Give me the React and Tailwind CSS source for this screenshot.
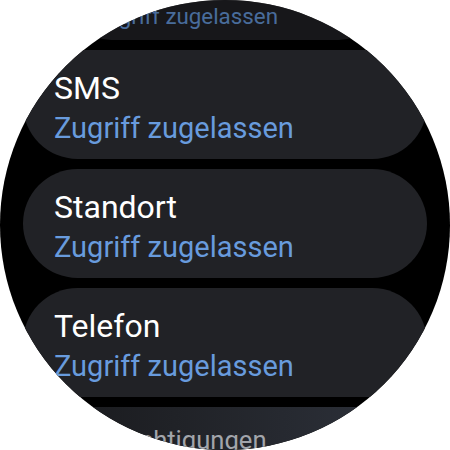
const permissions = [
  { name: 'Mikrofon', status: 'Zugriff zugelassen', edge: 'top' },
  { name: 'SMS', status: 'Zugriff zugelassen' },
  { name: 'Standort', status: 'Zugriff zugelassen' },
  { name: 'Telefon', status: 'Zugriff zugelassen' },
]

function PermissionChip({ name, status, edge }) {
  const scaled = edge === 'top' ? 'scale-[0.77] origin-bottom opacity-70' : ''
  return (
    <div className={`w-[404px] shrink-0 rounded-full bg-[#212226] pl-[31px] pr-6 pt-[18px] pb-[11px] ${scaled}`}>
      <div className="text-[32px] leading-[40px] text-white">{name}</div>
      <div className="text-[29px] leading-[40px] text-[#689bdd]">{status}</div>
    </div>
  )
}

export default function App() {
  return (
    <div className="w-[450px] h-[450px] bg-white" style={{ fontFamily: 'Roboto, "Noto Sans", sans-serif' }}>
      <div className="w-[450px] h-[450px] rounded-full overflow-hidden bg-black flex flex-col items-center gap-[10px]">
        <div className="mt-[-79px]" />
        {permissions.map((p) => (
          <PermissionChip key={p.name} {...p} />
        ))}
        <div className="w-[404px] h-[80px] shrink-0 rounded-full bg-gradient-to-r from-[#1a1b1e] to-[#2c3039] pl-[31px] pt-[21px] scale-[0.8] origin-top">
          <div className="text-[32px] leading-[40px] text-[#a2a5ab]">Berechtigungen</div>
        </div>
      </div>
    </div>
  )
}
